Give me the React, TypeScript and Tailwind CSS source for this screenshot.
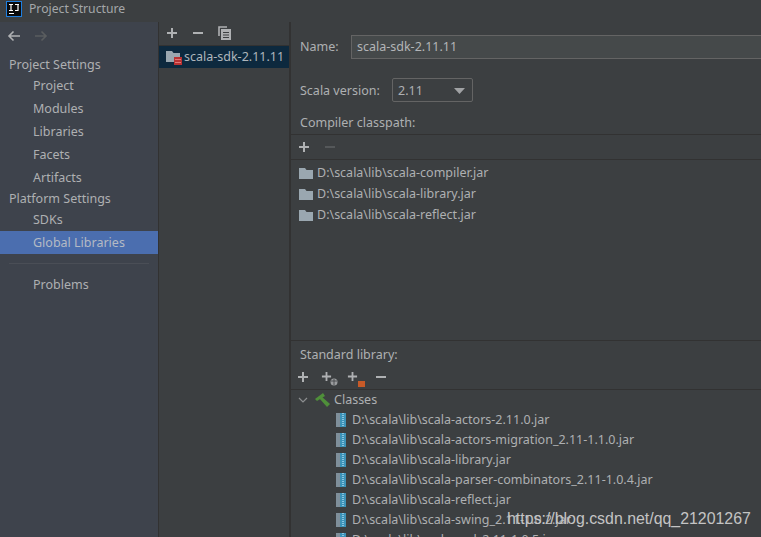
import React from "react";

const Plus = ({ c = "#afb1b3", s = 12 }: { c?: string; s?: number }) => (
  <svg width={s} height={s} viewBox="0 0 12 12" className="shrink-0">
    <path d="M1 6h10M6 1v10" stroke={c} strokeWidth="2" />
  </svg>
);
const Minus = ({ c = "#afb1b3" }: { c?: string }) => (
  <svg width="12" height="12" viewBox="0 0 12 12" className="shrink-0">
    <path d="M1 6h10" stroke={c} strokeWidth="2" />
  </svg>
);
const Folder = () => (
  <svg width="14" height="12" viewBox="0 0 14 12" className="shrink-0">
    <path d="M0 1h6l1.5 2H14v9H0z" fill="#9aa7b0" />
  </svg>
);
const Jar = () => (
  <svg width="10" height="14" viewBox="0 0 10 14" className="shrink-0">
    <rect x="0" y="0" width="4" height="14" fill="#7f8f9a" />
    <rect x="4" y="0" width="6" height="14" fill="#3d93b8" />
    <path d="M7 0v14" stroke="#a5d8ee" strokeWidth="1.5" strokeDasharray="1 1" />
  </svg>
);

const nav1 = ["Project", "Modules", "Libraries", "Facets", "Artifacts"];
const jars1 = ["scala-compiler.jar", "scala-library.jar", "scala-reflect.jar"];
const jars2 = [
  "scala-actors-2.11.0.jar",
  "scala-actors-migration_2.11-1.1.0.jar",
  "scala-library.jar",
  "scala-parser-combinators_2.11-1.0.4.jar",
  "scala-reflect.jar",
  "scala-swing_2.11-1.0.2.jar",
  "scala-xml_2.11-1.0.5.jar",
];

export default function App() {
  return (
    <div className="relative flex h-[537px] w-[761px] flex-col overflow-hidden bg-[#3c3f41] font-['Noto_Sans',sans-serif] text-[12.5px] text-[#aeb0b2]">
      <div className="flex h-[22px] shrink-0 items-center gap-[7px] pb-[5px] pl-[6px]">
        <svg width="16" height="16" viewBox="0 0 16 16" className="shrink-0">
          <rect width="16" height="16" fill="#1e7fe0" />
          <rect x="1" y="1" width="14" height="14" fill="#0b0b0b" />
          <path d="M3 3.5h4M5 3.5v6M3 9.5h4M9 3.5h4M12 3.5v6H9" stroke="#fff" strokeWidth="1.2" fill="none" />
          <path d="M3 12.5h5" stroke="#fff" strokeWidth="1" />
        </svg>
        <span className="mt-[2px] text-[12.2px] text-[#a4a7a9]">Project Structure</span>
      </div>
      <div className="flex min-h-0 flex-1">
        <div className="flex w-[158px] shrink-0 flex-col bg-[#3e434c]">
          <div className="flex h-[28px] items-center gap-[13px] pl-[7px]">
            <svg width="14" height="12" viewBox="0 0 14 12"><path d="M13 6H2M6.5 1.5L2 6l4.5 4.5" stroke="#afb1b3" strokeWidth="1.6" fill="none" /></svg>
            <svg width="14" height="12" viewBox="0 0 14 12"><path d="M1 6h11M7.5 1.5L12 6l-4.5 4.5" stroke="#5a5d5f" strokeWidth="1.6" fill="none" /></svg>
          </div>
          <div className="mt-[3px] flex h-[21px] items-center pt-[4px] pl-[9px]">Project Settings</div>
          {nav1.map((t) => (
            <div key={t} className="flex h-[23px] items-center pt-[2px] pl-[33px]">{t}</div>
          ))}
          <div className="flex h-[19px] items-center pt-[2px] pl-[9px]">Platform Settings</div>
          <div className="flex h-[23px] items-center pt-[2px] pl-[33px]">SDKs</div>
          <div className="flex h-[23px] items-center bg-[#4b6eaf] pt-[2px] pl-[33px] text-[#b4bac4]">Global Libraries</div>
          <div className="mx-[9px] mt-[9px] h-px bg-[#4a4e56]" />
          <div className="mt-[9px] flex h-[23px] items-center pt-[2px] pl-[33px]">Problems</div>
        </div>
        <div className="w-px shrink-0 bg-[#323232]" />
        <div className="flex w-[130px] shrink-0 flex-col">
          <div className="flex h-[24px] items-center gap-[14px] border-b border-[#323232] pb-[2px] pl-[7px]">
            <Plus />
            <Minus />
            <svg width="13" height="14" viewBox="0 0 13 14" className="shrink-0">
              <path d="M1 10V1h8" stroke="#afb1b3" strokeWidth="1.6" fill="none" />
              <rect x="3" y="3" width="10" height="11" fill="#afb1b3" />
              <path d="M5 6.5h6M5 9h6M5 11.5h6" stroke="#3c3f41" strokeWidth="1" />
            </svg>
          </div>
          <div className="flex h-[22px] items-center bg-[#0d293e] pl-[7px] text-[#aeb6bc]">
            <span className="relative mr-[4px] h-[14px] w-[14px] shrink-0">
              <Folder />
              <svg width="8" height="8" viewBox="0 0 8 8" className="absolute right-[-2px] bottom-[-1px]">
                <rect width="8" height="8" fill="#b93232" />
                <path d="M1 2.5h6M1 5.5h6" stroke="#e88" strokeWidth="0.8" />
              </svg>
            </span>
            scala-sdk-2.11.11
          </div>
        </div>
        <div className="w-[2px] shrink-0 bg-[#323232]" />
        <div className="flex min-w-0 flex-1 flex-col">
          <div className="flex h-[50px] shrink-0 items-center pl-[9px]">
            <span className="w-[51px]">Name:</span>
            <div className="flex h-[24px] flex-1 items-center border border-r-0 border-[#646464] bg-[#45494a] pl-[5px] text-[#b3b5b7]">
              scala-sdk-2.11.11
            </div>
          </div>
          <div className="mt-[6px] flex h-[24px] shrink-0 items-center pl-[9px]">
            <span className="mt-[2px] w-[92px]">Scala version:</span>
            <div className="flex h-[24px] w-[81px] items-center justify-between rounded-[2px] border border-[#646464] pt-[2px] pr-[7px] pl-[5px]">
              2.11
              <svg width="11" height="6" viewBox="0 0 11 6"><path d="M0 0h11L5.5 6z" fill="#a0a2a4" /></svg>
            </div>
          </div>
          <div className="mt-[8px] flex h-[24px] shrink-0 items-center pt-[2px] pl-[9px]">Compiler classpath:</div>
          <div className="flex h-[26px] shrink-0 items-center gap-[14px] border-y border-[#323232] pl-[7px]">
            <Plus />
            <Minus c="#55585a" />
          </div>
          <div className="flex min-h-0 flex-1 flex-col pt-[2px]">
            {jars1.map((j) => (
              <div key={j} className="flex h-[21px] items-center gap-[4px] pt-[1px] pl-[8px]">
                <Folder />
                <span className="mt-[1px]">D:\scala\lib\{j}</span>
              </div>
            ))}
          </div>
          <div className="flex h-[197px] shrink-0 flex-col">
            <div className="flex h-[25px] shrink-0 items-center border-t border-[#323232] pt-[5px] pl-[9px]">Standard library:</div>
            <div className="flex h-[25px] shrink-0 items-center border-b border-[#323232] pl-[6px]">
              <Plus />
              <span className="relative ml-[12px] h-[12px] w-[12px]">
                <Plus s={11} />
                <svg width="8" height="8" viewBox="0 0 8 8" className="absolute right-[-5px] bottom-[-3px]">
                  <circle cx="4" cy="4" r="3.5" fill="#9a9c9e" />
                  <path d="M1 3h6M4 1v6" stroke="#3c3f41" strokeWidth="0.8" />
                </svg>
              </span>
              <span className="relative ml-[14px] h-[12px] w-[12px]">
                <Plus s={11} />
                <span className="absolute right-[-6px] bottom-[-4px] h-[6px] w-[7px] bg-[#c75a28]" />
              </span>
              <span className="ml-[16px]"><Minus /></span>
            </div>
            <div className="flex h-[20px] shrink-0 items-center pl-[7px]">
              <svg width="10" height="6" viewBox="0 0 10 6" className="shrink-0"><path d="M1 1l4 4 4-4" stroke="#8c8e90" strokeWidth="1.2" fill="none" /></svg>
              <svg width="16" height="14" viewBox="0 0 16 14" className="mr-[3px] ml-[7px] shrink-0">
                <path d="M0 6L8 0l2 3-8 5z" fill="#4f8f3a" />
                <path d="M6 3L15 11l-3 3L4 5z" fill="#4f8f3a" />
              </svg>
              Classes
            </div>
            <div className="flex min-h-0 flex-1 flex-col overflow-hidden">
              {jars2.map((j) => (
                <div key={j} className="flex h-[20px] shrink-0 items-center gap-[6px] pl-[45px]">
                  <Jar />
                  <span className="whitespace-nowrap">D:\scala\lib\{j}</span>
                </div>
              ))}
            </div>
          </div>
        </div>
      </div>
      <div className="absolute top-[507px] left-[507px] font-['Liberation_Sans',sans-serif] text-[15.9px] whitespace-nowrap text-[#c4c4c4]">
        https://blog.csdn.net/qq_21201267
      </div>
    </div>
  );
}
